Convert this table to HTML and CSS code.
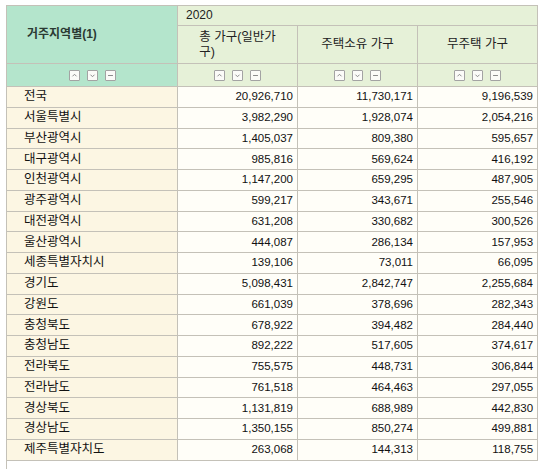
FILE: index.html
```
<!DOCTYPE html>
<html lang="ko">
<head>
<meta charset="utf-8">
<link rel="stylesheet" href="styles.css">
</head>
<body>
<div class="wrap">
<div class="frame">
<table class="grid">
<colgroup><col class="c1"><col class="c2"><col class="c2"><col class="c2"></colgroup>
<thead>
<tr class="h1">
<th class="dim" rowspan="2">거주지역별(1)</th>
<th class="year" colspan="3">2020</th>
</tr>
<tr class="h2">
<th class="item"><span class="wrapname">총 가구(일반가<br>구)</span></th>
<th class="item">주택소유 가구</th>
<th class="item">무주택 가구</th>
</tr>
<tr class="h3">
<th class="dimbtn"><span class="btns"><span class="b"><svg viewBox="0 0 11 11"><path d="M3 6.5 5.5 4 8 6.5" /></svg></span><span class="b"><svg viewBox="0 0 11 11"><path d="M3 4.5 5.5 7 8 4.5" /></svg></span><span class="b"><svg viewBox="0 0 11 11"><path d="M2.5 5.5h6" /></svg></span></span></th>
<th class="itembtn"><span class="btns"><span class="b"><svg viewBox="0 0 11 11"><path d="M3 6.5 5.5 4 8 6.5" /></svg></span><span class="b"><svg viewBox="0 0 11 11"><path d="M3 4.5 5.5 7 8 4.5" /></svg></span><span class="b"><svg viewBox="0 0 11 11"><path d="M2.5 5.5h6" /></svg></span></span></th>
<th class="itembtn"><span class="btns"><span class="b"><svg viewBox="0 0 11 11"><path d="M3 6.5 5.5 4 8 6.5" /></svg></span><span class="b"><svg viewBox="0 0 11 11"><path d="M3 4.5 5.5 7 8 4.5" /></svg></span><span class="b"><svg viewBox="0 0 11 11"><path d="M2.5 5.5h6" /></svg></span></span></th>
<th class="itembtn"><span class="btns"><span class="b"><svg viewBox="0 0 11 11"><path d="M3 6.5 5.5 4 8 6.5" /></svg></span><span class="b"><svg viewBox="0 0 11 11"><path d="M3 4.5 5.5 7 8 4.5" /></svg></span><span class="b"><svg viewBox="0 0 11 11"><path d="M2.5 5.5h6" /></svg></span></span></th>
</tr>
</thead>
<tbody>
<tr><td class="name">전국</td><td class="num">20,926,710</td><td class="num">11,730,171</td><td class="num">9,196,539</td></tr>
<tr><td class="name">서울특별시</td><td class="num">3,982,290</td><td class="num">1,928,074</td><td class="num">2,054,216</td></tr>
<tr><td class="name">부산광역시</td><td class="num">1,405,037</td><td class="num">809,380</td><td class="num">595,657</td></tr>
<tr><td class="name">대구광역시</td><td class="num">985,816</td><td class="num">569,624</td><td class="num">416,192</td></tr>
<tr><td class="name">인천광역시</td><td class="num">1,147,200</td><td class="num">659,295</td><td class="num">487,905</td></tr>
<tr><td class="name">광주광역시</td><td class="num">599,217</td><td class="num">343,671</td><td class="num">255,546</td></tr>
<tr><td class="name">대전광역시</td><td class="num">631,208</td><td class="num">330,682</td><td class="num">300,526</td></tr>
<tr><td class="name">울산광역시</td><td class="num">444,087</td><td class="num">286,134</td><td class="num">157,953</td></tr>
<tr><td class="name">세종특별자치시</td><td class="num">139,106</td><td class="num">73,011</td><td class="num">66,095</td></tr>
<tr><td class="name">경기도</td><td class="num">5,098,431</td><td class="num">2,842,747</td><td class="num">2,255,684</td></tr>
<tr><td class="name">강원도</td><td class="num">661,039</td><td class="num">378,696</td><td class="num">282,343</td></tr>
<tr><td class="name">충청북도</td><td class="num">678,922</td><td class="num">394,482</td><td class="num">284,440</td></tr>
<tr><td class="name">충청남도</td><td class="num">892,222</td><td class="num">517,605</td><td class="num">374,617</td></tr>
<tr><td class="name">전라북도</td><td class="num">755,575</td><td class="num">448,731</td><td class="num">306,844</td></tr>
<tr><td class="name">전라남도</td><td class="num">761,518</td><td class="num">464,463</td><td class="num">297,055</td></tr>
<tr><td class="name">경상북도</td><td class="num">1,131,819</td><td class="num">688,989</td><td class="num">442,830</td></tr>
<tr><td class="name">경상남도</td><td class="num">1,350,155</td><td class="num">850,274</td><td class="num">499,881</td></tr>
<tr><td class="name">제주특별자치도</td><td class="num">263,068</td><td class="num">144,313</td><td class="num">118,755</td></tr>
</tbody>
</table>
</div>
</div>
</body>
</html>
```
FILE: styles.css
```
html, body {
  margin: 0;
  padding: 0;
  background: #ffffff;
}

body {
  font-family: "Liberation Sans", "Noto Sans CJK KR", sans-serif;
  font-size: 12px;
  color: #222222;
}

.wrap {
  padding: 5px 0 0 6px;
}

.frame {
  border-left: 1px solid #c4c1b8;
  height: 464px;
}

.grid {
  border-collapse: collapse;
  table-layout: fixed;
  width: 531px;
  margin-left: -1px;
}

.c1 { width: 171px; }
.c2 { width: 120px; }

.grid th,
.grid td {
  border: 1px solid #c4c1b8;
  padding: 0;
  font-weight: normal;
  line-height: 15px;
}

.dim {
  background: #b4e5cc;
  font-weight: bold !important;
  color: #2b3a33;
  text-align: left;
  padding-left: 20px !important;
  font-size: 12px;
}

.year {
  background: #e6f1d8;
  text-align: left;
  padding-left: 8px !important;
  height: 19px;
}

.item {
  background: #e6f1d8;
  text-align: center;
  height: 37px;
  font-size: 12.5px;
}

.wrapname {
  display: inline-block;
  text-align: left;
}

.h3 th {
  height: 22px;
}

.dimbtn { background: #b4e5cc; }
.itembtn { background: #e6f1d8; }

.btns {
  display: flex;
  justify-content: center;
  gap: 7px;
}

.b {
  width: 9px;
  height: 9px;
  border: 1px solid #a3a3a3;
  border-radius: 1px;
  background: #fbfbf8;
  display: flex;
}

.b svg {
  width: 9px;
  height: 9px;
  fill: none;
  stroke: #8a8a8a;
  stroke-width: 1.2;
}

.grid tbody td {
  height: 19.75px;
}

.name {
  background: #fcf6e3;
  padding-left: 17px !important;
  font-size: 12.5px;
  color: #111111;
}

.num {
  background: #fffef8;
  text-align: right;
  padding-right: 4px !important;
  font-size: 11.5px;
  color: #111111;
}
```
